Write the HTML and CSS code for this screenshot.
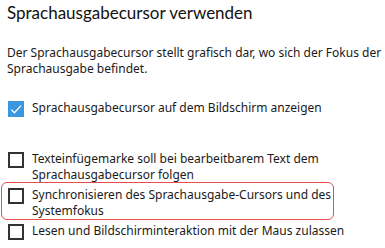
FILE: index.html
```html
<!DOCTYPE html>
<html lang="de">
<head>
<meta charset="utf-8">
<link rel="stylesheet" href="styles.css">
</head>
<body>
<div class="page">
  <h1 class="title">Sprachausgabecursor verwenden</h1>
  <p class="desc">Der Sprachausgabecursor stellt grafisch dar, wo sich der Fokus der Sprachausgabe befindet.</p>
  <div class="options">
    <label class="row row-first">
      <span class="box checked">
        <svg viewBox="0 0 16 16" width="16" height="16"><path d="M3.2 8.6 L6.4 11.8 L13 4.6" fill="none" stroke="#fff" stroke-width="1.3"/></svg>
      </span>
      <span class="text">Sprachausgabecursor auf dem Bildschirm anzeigen</span>
    </label>
    <label class="row row-gap">
      <span class="box"></span>
      <span class="text">Texteinfügemarke soll bei bearbeitbarem Text dem Sprachausgabecursor folgen</span>
    </label>
    <label class="row highlighted">
      <span class="box"></span>
      <span class="text">Synchronisieren des Sprachausgabe-Cursors und des Systemfokus</span>
    </label>
    <label class="row">
      <span class="box"></span>
      <span class="text">Lesen und Bildschirminteraktion mit der Maus zulassen</span>
    </label>
  </div>
</div>
</body>
</html>
```
FILE: styles.css
```css
html, body {
  margin: 0;
  padding: 0;
  background: #fff;
}
body {
  font-family: "Noto Sans", "Open Sans", sans-serif;
  color: #1a1a1a;
  width: 385px;
  height: 248px;
  overflow: hidden;
}
.page {
  padding: 0 0 0 7px;
  width: 378px;
}
.title {
  font-family: "Lato", "Noto Sans", sans-serif;
  font-size: 17px;
  font-weight: 400;
  line-height: 24px;
  margin: 0;
  padding-top: 1px;
  color: #111;
}
.desc {
  font-size: 12px;
  line-height: 16px;
  margin: 20px 0 0 0;
}
.options {
  display: flex;
  flex-direction: column;
  gap: 4px;
  margin-top: 24px;
}
.row {
  position: relative;
  display: flex;
  align-items: flex-start;
  gap: 8px;
  font-size: 12px;
  line-height: 16px;
  padding-left: 1px;
  width: 345px;
}
.row-gap {
  margin-top: 31px;
}
.box {
  flex: none;
  width: 16px;
  height: 16px;
  box-sizing: border-box;
  border: 2px solid #333;
  display: flex;
  align-items: center;
  justify-content: center;
}
.box.checked {
  border: none;
  background: #3a96dd;
}
.box svg {
  display: block;
}
.text {
  position: relative;
  top: -1px;
}
.highlighted::after {
  content: "";
  position: absolute;
  left: -6px;
  top: -6px;
  width: 333px;
  height: 38px;
  box-sizing: border-box;
  border: 1px solid #ea4b4b;
  border-radius: 6px;
  pointer-events: none;
}
```
